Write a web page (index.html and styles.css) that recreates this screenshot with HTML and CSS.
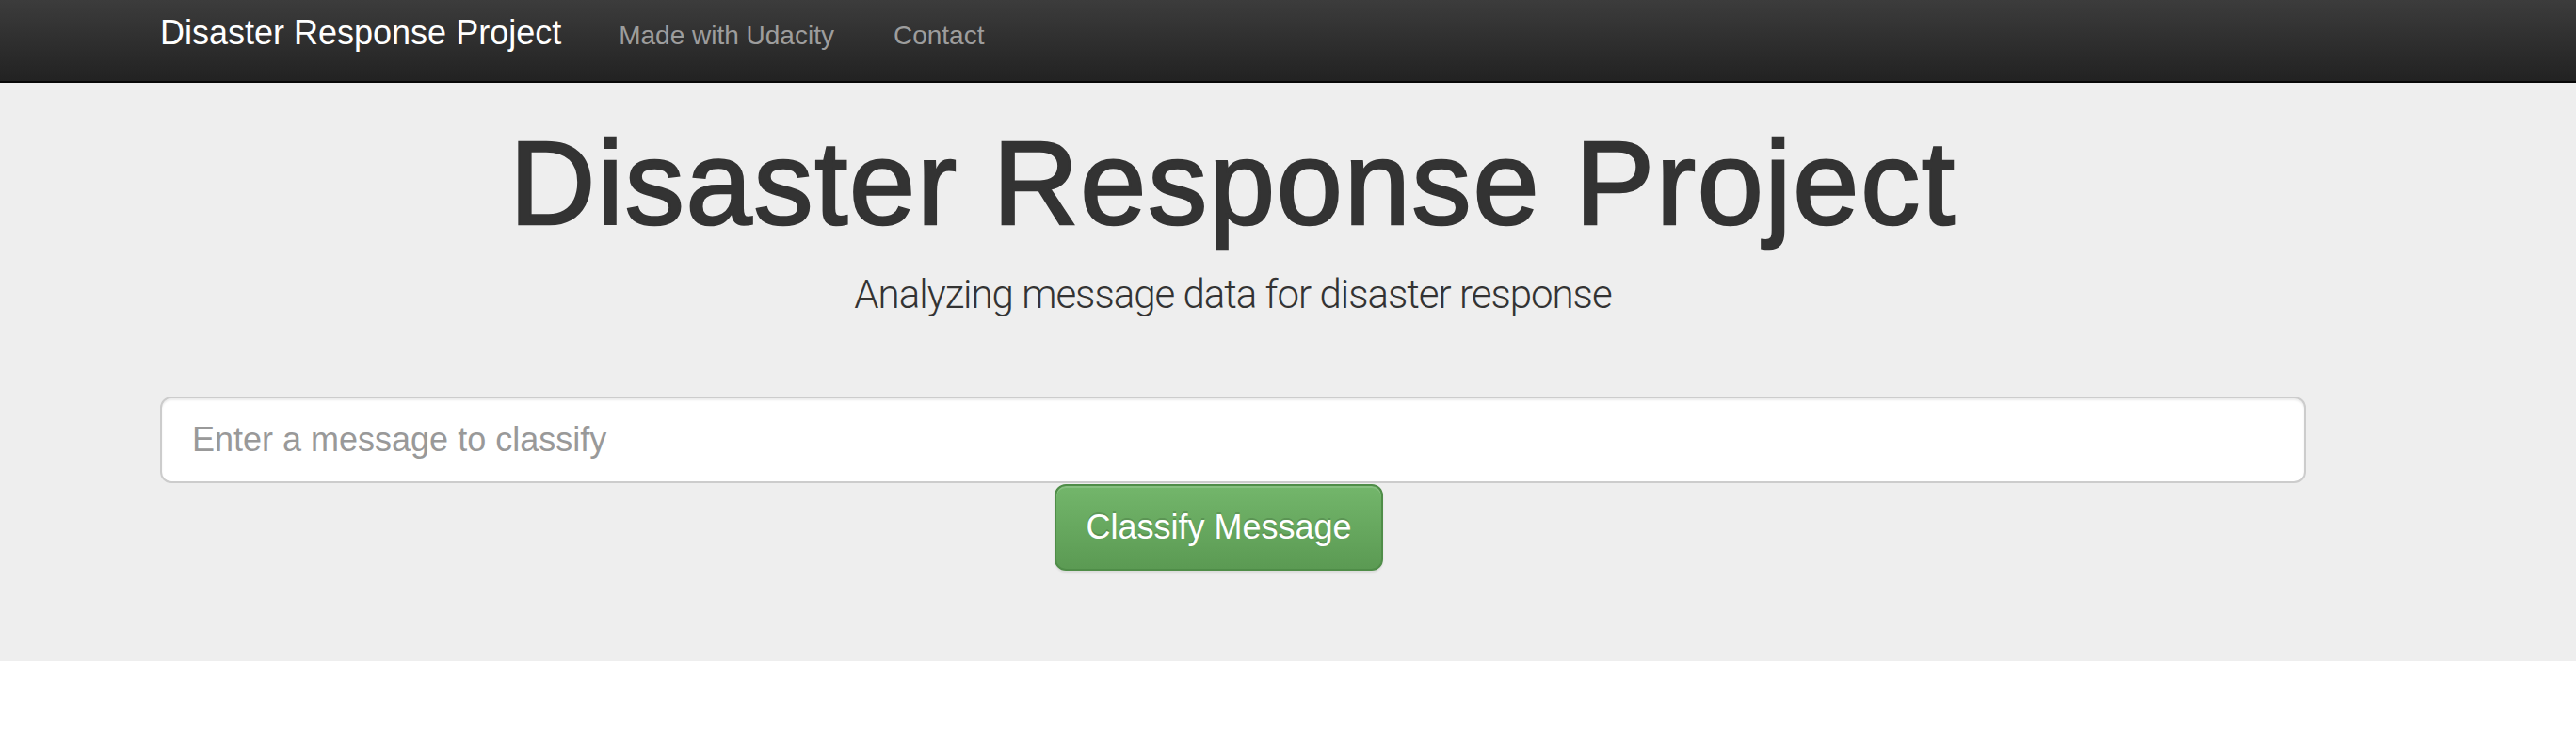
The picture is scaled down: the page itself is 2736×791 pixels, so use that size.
FILE: index.html
```html
<!DOCTYPE html>
<html lang="en">
<head>
<meta charset="utf-8">
<title>Disaster Response Project</title>
<link rel="stylesheet" href="styles.css">
</head>
<body>
<nav class="navbar">
  <div class="container nav-inner">
    <a class="brand" href="#">Disaster Response Project</a>
    <a class="nav-link" href="#">Made with Udacity</a>
    <a class="nav-link" href="#">Contact</a>
  </div>
</nav>
<section class="jumbotron">
  <div class="container">
    <h1 class="title">Disaster Response Project</h1>
    <p class="subtitle">Analyzing message data for disaster response</p>
    <form class="classify-form" action="#">
      <input class="message-input" type="text" name="query" placeholder="Enter a message to classify">
      <div class="button-row">
        <button class="btn-classify" type="submit">Classify Message</button>
      </div>
    </form>
  </div>
</section>
</body>
</html>
```

FILE: styles.css
```css
html, body {
  margin: 0;
  padding: 0;
  background: #ffffff;
  font-family: "Liberation Sans", Arial, sans-serif;
  color: #333333;
}

.container {
  box-sizing: border-box;
  width: 2339px;
  margin-left: 140px;
  padding: 0 30px;
}

.navbar {
  height: 86px;
  background: linear-gradient(to bottom, #3c3c3c 0%, #222222 100%);
  border-bottom: 2px solid #080808;
}

.nav-inner {
  display: flex;
  align-items: baseline;
  padding-top: 15px;
}

.brand {
  font-size: 36px;
  line-height: 40px;
  color: #ffffff;
  text-decoration: none;
  padding-right: 30px;
}

.nav-link {
  font-size: 28px;
  line-height: 40px;
  color: #9d9d9d;
  text-decoration: none;
  padding: 0 32px 0 31px;
}

.jumbotron {
  background: #eeeeee;
  padding: 38px 0 96px;
}

.title {
  margin: 0;
  font-size: 126px;
  line-height: 138.6px;
  font-weight: 400;
  letter-spacing: 1.8px;
  -webkit-text-stroke: 2.5px #333333;
  text-align: center;
  color: #333333;
}

.subtitle {
  margin: 18px 0 0;
  font-family: Roboto, "Liberation Sans", sans-serif;
  font-weight: 300;
  font-size: 42px;
  line-height: 59px;
  letter-spacing: -1px;
  text-align: center;
  color: #333333;
}

.classify-form {
  margin-top: 79px;
}

.message-input {
  display: block;
  box-sizing: border-box;
  width: 100%;
  height: 92px;
  padding: 0 32px;
  font-family: "Liberation Sans", Arial, sans-serif;
  font-size: 36px;
  color: #555555;
  background: #ffffff;
  border: 2px solid #cccccc;
  border-radius: 12px;
  box-shadow: inset 0 2px 2px rgba(0, 0, 0, 0.075);
  outline: none;
}

.message-input::placeholder {
  color: #999999;
}

.button-row {
  display: flex;
  justify-content: center;
  padding-right: 30px;
  margin-top: 1px;
}

.btn-classify {
  box-sizing: border-box;
  width: 349px;
  height: 92px;
  padding: 0 30px;
  font-family: "Liberation Sans", Arial, sans-serif;
  font-size: 36px;
  color: #ffffff;
  text-shadow: 0 -2px 0 rgba(0, 0, 0, 0.15);
  background: linear-gradient(to bottom, #73b66b 0%, #5b9a53 100%);
  border: 2px solid #4f8d48;
  border-radius: 12px;
  box-shadow: inset 0 2px 0 rgba(255, 255, 255, 0.15), 0 2px 2px rgba(0, 0, 0, 0.075);
  cursor: pointer;
}
```
